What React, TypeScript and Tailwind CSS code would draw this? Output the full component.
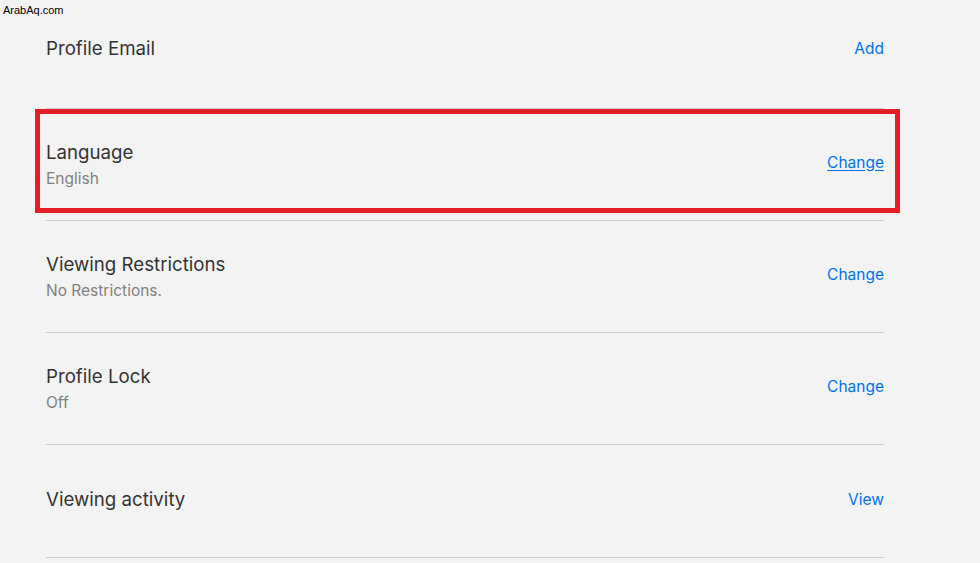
const rows = [
  { title: 'Profile Email', sub: null, action: 'Add', cls: 'pt-[37px] pb-[47px]' },
  { title: 'Language', sub: 'English', action: 'Change', cls: 'pt-[32px] pb-[29px]', underline: true },
  { title: 'Viewing Restrictions', sub: 'No Restrictions.', action: 'Change', cls: 'pt-[32px] pb-[29px]' },
  { title: 'Profile Lock', sub: 'Off', action: 'Change', cls: 'pt-[32px] pb-[29px]' },
  { title: 'Viewing activity', sub: null, action: 'View', cls: 'pt-[43px] pb-[45px]' },
]

export default function App() {
  return (
    <div className="relative w-[980px] h-[563px] overflow-hidden bg-[#f3f3f3] font-['Inter',sans-serif]">
      <span className="absolute left-[3px] top-[3px] text-[11px] leading-[14px] text-black font-['Liberation_Sans',sans-serif]">
        ArabAq.com
      </span>

      <div className="ml-[46px] w-[838px] flex flex-col">
        {rows.map((r) => (
          <div
            key={r.title}
            className={`flex justify-between items-center border-b border-[#cccccc] ${r.cls}`}
          >
            <div className="flex flex-col">
              <div className="text-[18.7px] leading-[24px] text-[#333333]">{r.title}</div>
              {r.sub && (
                <div className="mt-[2px] text-[15.5px] leading-[24px] text-[#808080]">{r.sub}</div>
              )}
            </div>
            <a
              href="#"
              className={`text-[15.5px] leading-[24px] text-[#0071eb] ${r.sub ? 'mb-[7px]' : ''} ${
                r.underline ? 'underline underline-offset-2' : 'no-underline'
              }`}
            >
              {r.action}
            </a>
          </div>
        ))}
      </div>

      <div className="absolute left-[35px] top-[109px] w-[865px] h-[104px] border-[5px] border-[#e31e24]" />
    </div>
  )
}
